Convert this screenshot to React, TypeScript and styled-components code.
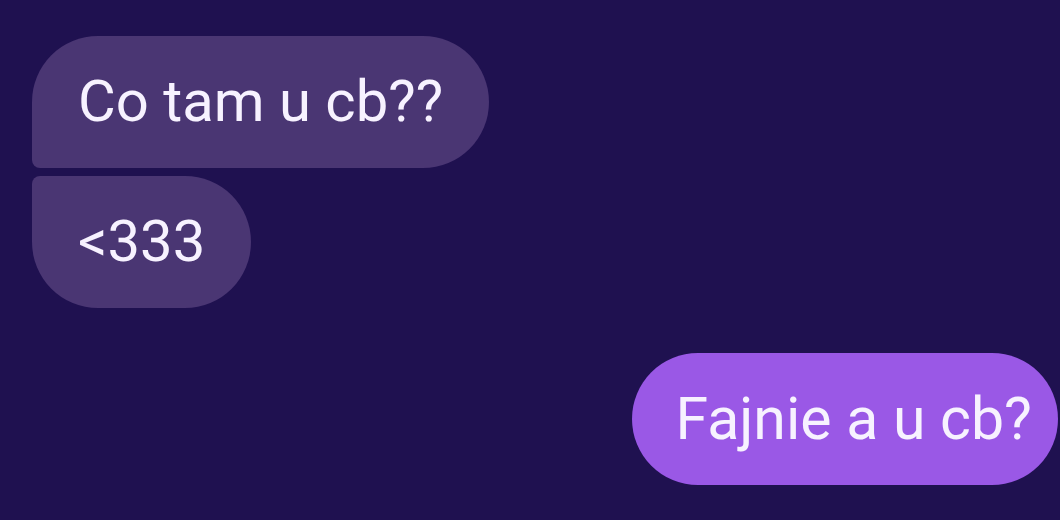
import React from "react";
import styled, { createGlobalStyle } from "styled-components";

type Side = "in" | "out";
type Corner = "first" | "last" | "single";

const GlobalStyle = createGlobalStyle`
  html, body {
    margin: 0;
    padding: 0;
    background: #1f1150;
  }
  body {
    font-family: Roboto, "Noto Sans", sans-serif;
  }
`;

const Thread = styled.div`
  display: flex;
  flex-direction: column;
  width: 1060px;
  height: 520px;
  box-sizing: border-box;
  padding: 36px 2px 0 32px;
  overflow: hidden;
`;

const Group = styled.div<{ side: Side }>`
  display: flex;
  flex-direction: column;
  gap: 8px;
  align-items: ${(p) => (p.side === "out" ? "flex-end" : "flex-start")};
  margin-top: ${(p) => (p.side === "out" ? "45px" : "0")};
`;

const radius: Record<Corner, string> = {
  first: "66px 66px 66px 8px",
  last: "8px 66px 66px 66px",
  single: "66px",
};

const Bubble = styled.div<{ side: Side; corner: Corner }>`
  display: flex;
  align-items: center;
  height: 132px;
  box-sizing: border-box;
  padding: ${(p) => (p.side === "out" ? "0 26px 2px 44px" : "0 46px 2px")};
  border-radius: ${(p) => radius[p.corner]};
  background: ${(p) => (p.side === "out" ? "#9a58e6" : "#4a3673")};
  color: #f7f2ff;
  font-size: ${(p) => (p.side === "out" ? "59px" : "58px")};
  white-space: nowrap;
`;

export default function App() {
  return (
    <>
      <GlobalStyle />
      <Thread>
        <Group side="in">
          <Bubble side="in" corner="first">Co tam u cb??</Bubble>
          <Bubble side="in" corner="last">&lt;333</Bubble>
        </Group>
        <Group side="out">
          <Bubble side="out" corner="single">Fajnie a u cb?</Bubble>
        </Group>
      </Thread>
    </>
  );
}
